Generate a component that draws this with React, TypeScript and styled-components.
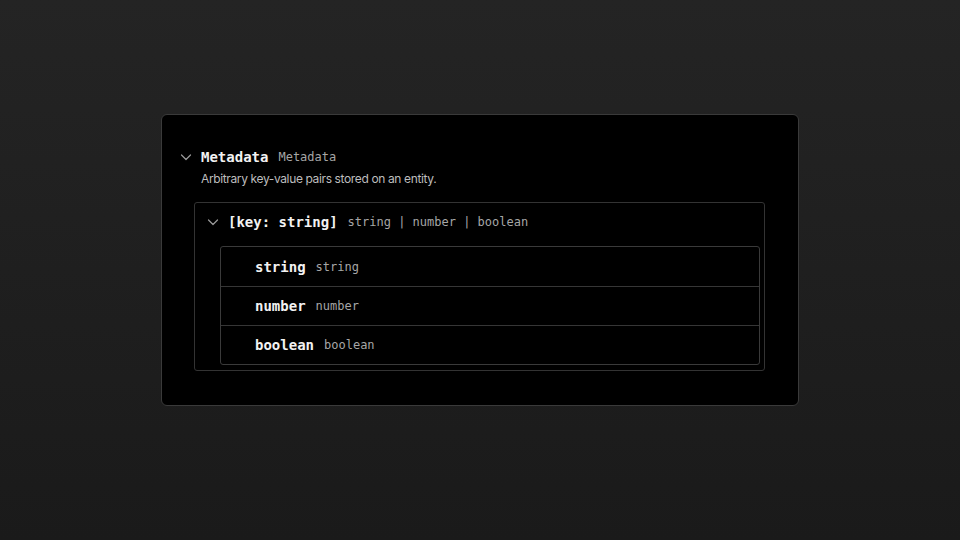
import React from "react";
import styled, { createGlobalStyle } from "styled-components";

const GlobalStyle = createGlobalStyle`
  html, body {
    margin: 0;
    padding: 0;
  }
  body {
    background: linear-gradient(180deg, #242424 0%, #1a1a1a 100%);
    min-height: 540px;
    font-family: Inter, "Liberation Sans", sans-serif;
  }
`;

const Page = styled.div`
  min-height: 540px;
  box-sizing: border-box;
  padding: 114px 161px 0;
`;

const Card = styled.div`
  box-sizing: border-box;
  width: 638px;
  height: 292px;
  background: #000;
  border: 1px solid #3a3a3a;
  border-radius: 6px;
  padding: 32px 33px 0 18px;
`;

const Row = styled.div`
  display: flex;
  align-items: center;
  height: 20px;
`;

const Chevron = styled.svg`
  width: 12px;
  height: 12px;
  flex: none;
  color: #9a9a9a;
`;

const Name = styled.span<{ $flush?: boolean }>`
  font-family: "DejaVu Sans Mono", "Liberation Mono", monospace;
  font-weight: 700;
  font-size: 14px;
  color: #f2f2f2;
  margin-left: ${(p) => (p.$flush ? 0 : 9)}px;
  white-space: pre;
`;

const TypeLabel = styled.span`
  font-family: "DejaVu Sans Mono", "Liberation Mono", monospace;
  font-size: 12px;
  color: #a6a6a6;
  margin-left: 10px;
  white-space: pre;
`;

const Description = styled.div`
  margin: 4px 0 0 21px;
  font-size: 12px;
  letter-spacing: -0.37px;
  line-height: 16px;
  color: #bdbdbd;
`;

const Group = styled.div`
  margin: 15px 0 0 14px;
  border: 1px solid #333;
  border-radius: 3px;
  padding: 0 4px 5px 25px;
`;

const GroupHeader = styled.div`
  display: flex;
  align-items: center;
  height: 38px;
  margin-left: -13px;
`;

const List = styled.div`
  margin-top: 5px;
  border: 1px solid #3a3a3a;
  border-radius: 3px;
`;

const Item = styled.div`
  display: flex;
  align-items: center;
  height: 39px;
  padding-left: 34px;
  & + & {
    border-top: 1px solid #363636;
    height: 38px;
  }
`;

const ChevronDown = () => (
  <Chevron viewBox="0 0 12 12" fill="none">
    <polyline
      points="1.5,4 6,8.5 10.5,4"
      stroke="currentColor"
      strokeWidth={1.2}
      strokeLinecap="round"
      strokeLinejoin="round"
    />
  </Chevron>
);

const items = ["string", "number", "boolean"];

const App = () => {
  return (
    <Page>
      <GlobalStyle />
      <Card>
        <Row>
          <ChevronDown />
          <Name>Metadata</Name>
          <TypeLabel>Metadata</TypeLabel>
        </Row>
        <Description>Arbitrary key-value pairs stored on an entity.</Description>
        <Group>
          <GroupHeader>
            <ChevronDown />
            <Name>[key: string]</Name>
            <TypeLabel>string | number | boolean</TypeLabel>
          </GroupHeader>
          <List>
            {items.map((t) => (
              <Item key={t}>
                <Name $flush>{t}</Name>
                <TypeLabel>{t}</TypeLabel>
              </Item>
            ))}
          </List>
        </Group>
      </Card>
    </Page>
  );
};

export default App;
